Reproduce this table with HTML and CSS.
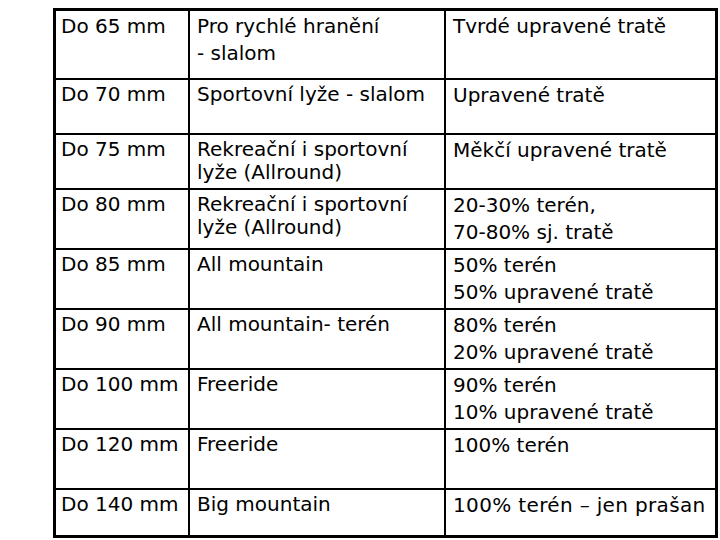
FILE: index.html
```html
<!DOCTYPE html>
<html lang="cs">
<head>
<meta charset="utf-8">
<title>Šířka lyží</title>
<link rel="stylesheet" href="styles.css">
</head>
<body>
<div class="table">
  <div class="cell c1 tall">Do 65 mm</div>
  <div class="cell c2 tall">Pro rychlé hranění<br>- slalom</div>
  <div class="cell c3">Tvrdé upravené tratě</div>

  <div class="cell c1">Do 70 mm</div>
  <div class="cell c2">Sportovní lyže - slalom</div>
  <div class="cell c3">Upravené tratě</div>

  <div class="cell c1">Do 75 mm</div>
  <div class="cell c2">Rekreační i sportovní<br>lyže (Allround)</div>
  <div class="cell c3">Měkčí upravené tratě</div>

  <div class="cell c1">Do 80 mm</div>
  <div class="cell c2">Rekreační i sportovní<br>lyže (Allround)</div>
  <div class="cell c3">20-30% terén,<br>70-80% sj. tratě</div>

  <div class="cell c1">Do 85 mm</div>
  <div class="cell c2">All mountain</div>
  <div class="cell c3">50% terén<br>50% upravené tratě</div>

  <div class="cell c1">Do 90 mm</div>
  <div class="cell c2">All mountain- terén</div>
  <div class="cell c3">80% terén<br>20% upravené tratě</div>

  <div class="cell c1">Do 100 mm</div>
  <div class="cell c2">Freeride</div>
  <div class="cell c3">90% terén<br>10% upravené tratě</div>

  <div class="cell c1">Do 120 mm</div>
  <div class="cell c2">Freeride</div>
  <div class="cell c3">100% terén</div>

  <div class="cell c1">Do 140 mm</div>
  <div class="cell c2">Big mountain</div>
  <div class="cell c3 wide">100% terén – jen prašan</div>
</div>
</body>
</html>
```
FILE: styles.css
```css
html, body {
  margin: 0;
  padding: 0;
  background: #ffffff;
}

body {
  font-family: "DejaVu Sans", Verdana, sans-serif;
  font-size: 20px;
  color: #000000;
}

.table {
  display: grid;
  grid-template-columns: 132px 254px 269px;
  grid-template-rows: 67px 53px 53px 58px 58px 58px 58px 58px 45px;
  gap: 2px;
  padding: 3px;
  background: #000000;
  width: max-content;
  margin: 8px 0 0 53px;
}

.cell {
  background: #ffffff;
  padding-top: 3px;
  white-space: nowrap;
  overflow: hidden;
}

.c1 {
  padding-left: 5px;
  line-height: 23px;
}

.c2 {
  padding-left: 7px;
  line-height: 23px;
}

.c1.tall,
.c2.tall {
  padding-top: 2px;
  line-height: 27px;
}

.c3 {
  padding-top: 2px;
  padding-left: 7px;
  line-height: 27px;
}

.c3.wide {
  letter-spacing: 0.35px;
}
```
